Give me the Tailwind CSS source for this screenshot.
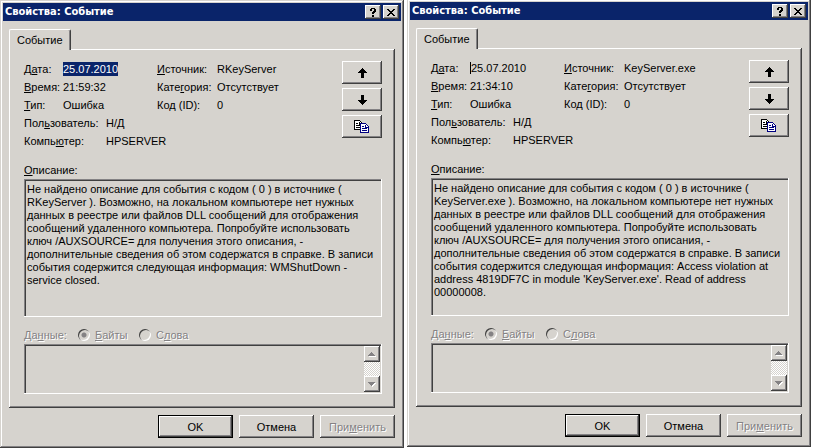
<!DOCTYPE html>
<html lang="ru">
<head>
    <meta charset="UTF-8">
    <meta name="viewport" content="width=device-width, initial-scale=1.0">
    <title>Свойства: Событие</title>
    <script src="https://cdn.jsdelivr.net/npm/@tailwindcss/browser@4"></script>
</head>
<body class="bg-white font-['Liberation_Sans',sans-serif] text-[11px] leading-[18px] text-black">
    <main id="windows" class="grid grid-cols-2 gap-[3px] pr-[2px] items-start"></main>

    <script>
        const events = [
            {
                id: 'rkey',
                offset: '',
                date: '<span class="bg-[#0a246a] text-white py-px">25.07.2010</span>',
                time: '21:59:32',
                source: 'RKeyServer',
                text: `Не найдено описание для события с кодом ( 0 ) в источнике (
RKeyServer ). Возможно, на локальном компьютере нет нужных
данных в реестре или файлов DLL сообщений для отображения
сообщений удаленного компьютера. Попробуйте использовать
ключ /AUXSOURCE= для получения этого описания, -
дополнительные сведения об этом содержатся в справке. В записи
события содержится следующая информация: WMShutDown -
service closed.`
            },
            {
                id: 'key',
                offset: '-mt-px',
                date: '<span class="border-l border-black">25.07.2010</span>',
                time: '21:34:10',
                source: 'KeyServer.exe',
                text: `Не найдено описание для события с кодом ( 0 ) в источнике (
KeyServer.exe ). Возможно, на локальном компьютере нет нужных
данных в реестре или файлов DLL сообщений для отображения
сообщений удаленного компьютера. Попробуйте использовать
ключ /AUXSOURCE= для получения этого описания, -
дополнительные сведения об этом содержатся в справке. В записи
события содержится следующая информация: Access violation at
address 4819DF7C in module 'KeyServer.exe'. Read of address
00000008.`
            }
        ];

        const raised = 'bg-[#d6d3ce] shadow-[inset_-1px_-1px_0_#404040,inset_1px_1px_0_#fff,inset_-2px_-2px_0_#848284]';
        const sunken = 'bg-[#d6d3ce] shadow-[inset_-1px_-1px_0_#fff,inset_1px_1px_0_#848284,inset_2px_2px_0_#404040]';

        function renderWindow(e) {
            return `
            <section class="${e.offset} bg-[#d6d3ce] p-[3px] pb-[10px] shadow-[inset_-1px_-1px_0_#404040,inset_1px_1px_0_#d6d3ce,inset_-2px_-2px_0_#848284,inset_2px_2px_0_#fff]">
                <header class="flex items-center h-[18px] bg-[#0a246a] px-[2px] gap-[2px]">
                    <h1 class="flex-1 font-['DejaVu_Sans_Condensed','DejaVu_Sans',sans-serif] font-bold leading-5 text-white">Свойства: Событие</h1>
                    <button aria-label="Справка" class="w-4 h-[14px] flex items-center justify-center ${raised}">
                        <svg width="6" height="9" viewBox="0 0 6 9" shape-rendering="crispEdges"><path d="M1 0h4v1h1v3h-1v1h-1v1h-2v-2h1v-1h1v-2h-2v2h-2v-2h1zM2 7h2v2h-2z"/></svg>
                    </button>
                    <button aria-label="Закрыть" class="w-4 h-[14px] flex items-center justify-center ${raised}">
                        <svg width="8" height="7" viewBox="0 0 8 7" shape-rendering="crispEdges"><path d="M0 0h2v1h1v1h2v-1h1v-1h2v1h-1v1h-1v1h-1v1h1v1h1v1h1v1h-2v-1h-1v-1h-2v1h-1v1h-2v-1h1v-1h1v-1h1v-1h-1v-1h-1v-1h-1z"/></svg>
                    </button>
                </header>

                <div class="px-[6px] pt-2">
                    <div role="tablist" class="flex">
                        <button role="tab" aria-selected="true" class="relative z-10 -mb-px h-[21px] px-[7px] rounded-t-[2px] bg-[#d6d3ce] border-t border-l border-white border-r border-r-[#404040] shadow-[inset_-1px_0_0_#848284]">Событие</button>
                    </div>

                    <div role="tabpanel" class="pl-[15px] pt-[11px] pb-[14px] pr-[13px] ${raised}">
                        <div class="flex justify-between">
                            <dl class="flex-1 grid grid-cols-[39px_43px_51px_60px_1fr] auto-rows-[18px] whitespace-nowrap">
                                <dt>Д<u>а</u>та:</dt><dd class="col-span-2">${e.date}</dd>
                                <dt><u>И</u>сточник:</dt><dd>${e.source}</dd>
                                <dt><u>В</u>ремя:</dt><dd class="col-span-2">${e.time}</dd>
                                <dt>Кате<u>г</u>ория:</dt><dd>Отсутствует</dd>
                                <dt><u>Т</u>ип:</dt><dd class="col-span-2">Ошибка</dd>
                                <dt>Ко<u>д</u> (ID):</dt><dd>0</dd>
                                <dt class="col-span-2">Пол<u>ь</u>зователь:</dt><dd class="col-span-3">Н/Д</dd>
                                <dt class="col-span-2">Компь<u>ю</u>тер:</dt><dd class="col-span-3">HPSERVER</dd>
                            </dl>
                            <div class="flex flex-col gap-1 pt-px">
                                <button aria-label="Предыдущее событие" class="w-10 h-[23px] flex items-center justify-center ${raised}">
                                    <svg width="9" height="10" viewBox="0 0 9 10" shape-rendering="crispEdges"><path d="M4 0h1v1h1v1h1v1h1v1h1v1h-3v5h-3v-5h-3v-1h1v-1h1v-1h1v-1h1z"/></svg>
                                </button>
                                <button aria-label="Следующее событие" class="w-10 h-[23px] flex items-center justify-center ${raised}">
                                    <svg width="9" height="10" viewBox="0 0 9 10" shape-rendering="crispEdges"><path d="M3 0h3v5h3v1h-1v1h-1v1h-1v1h-1v1h-1v-1h-1v-1h-1v-1h-1v-1h-1v-1h3z"/></svg>
                                </button>
                                <button aria-label="Копировать" class="w-10 h-[23px] flex items-center justify-center ${raised}">
                                    <svg width="16" height="13" viewBox="0 0 16 13" shape-rendering="crispEdges">
                                        <path d="M.5.5h5l3 3v6h-8z" fill="#fff" stroke="#000"/>
                                        <path d="M5 1v3h3M2 3h2M2 5h5M2 7h5" stroke="#000" fill="none" transform="translate(0 .5)"/>
                                        <path d="M6.5 3.5h5l3 3v6h-8z" fill="#fff" stroke="#000080"/>
                                        <path d="M11 4v3h3M8 6h2M8 8h5M8 10h5" stroke="#000080" fill="none" transform="translate(0 .5)"/>
                                    </svg>
                                </button>
                            </div>
                        </div>

                        <label for="${e.id}-text" class="block mt-[11px]"><u>О</u>писание:</label>
                        <textarea id="${e.id}-text" readonly class="block w-full h-[138px] pl-[3px] pt-1 resize-none overflow-hidden whitespace-pre leading-[13px] outline-none ${sunken}">${e.text}</textarea>

                        <fieldset disabled class="flex items-center mt-[9px] text-[#848284] [text-shadow:1px_1px_0_#fff]">
                            <legend class="float-left w-[54px]">Да<u>н</u>ные:</legend>
                            <label class="flex items-center gap-[5px] w-[61px]">
                                <input type="radio" name="${e.id}-format" checked class="appearance-none size-3 rounded-full bg-[radial-gradient(circle,#848284_2px,transparent_3px)] shadow-[inset_1px_1px_0_#404040,inset_-1px_-1px_0_#fff]">
                                <span><u>Б</u>айты</span>
                            </label>
                            <label class="flex items-center gap-[5px]">
                                <input type="radio" name="${e.id}-format" class="appearance-none size-3 rounded-full shadow-[inset_1px_1px_0_#404040,inset_-1px_-1px_0_#fff]">
                                <span>С<u>л</u>ова</span>
                            </label>
                        </fieldset>

                        <div class="flex h-[50px] p-[2px] ${sunken}">
                            <textarea aria-label="Данные" disabled class="flex-1 resize-none"></textarea>
                            <div class="flex flex-col w-4 bg-[repeating-conic-gradient(#fff_0_25%,#d6d3ce_0_50%)] bg-[length:2px_2px]">
                                <button disabled aria-label="Вверх" class="h-4 flex items-center justify-center ${raised}">
                                    <svg width="8" height="5" viewBox="0 0 8 5" shape-rendering="crispEdges"><path d="M4 1h1v1h1v1h1v1h1v1h-7v-1" fill="#fff"/><path d="M3 0h1v1h1v1h1v1h1v1h-7v-1h1v-1h1v-1h1z" fill="#848284"/></svg>
                                </button>
                                <button disabled aria-label="Вниз" class="mt-auto h-4 flex items-center justify-center ${raised}">
                                    <svg width="8" height="5" viewBox="0 0 8 5" shape-rendering="crispEdges"><path d="M1 1h7v1h-1v1h-1v1h-1v1h-1v-1h-1z" fill="#fff"/><path d="M0 0h7v1h-1v1h-1v1h-1v1h-1v-1h-1v-1h-1v-1h-1z" fill="#848284"/></svg>
                                </button>
                            </div>
                        </div>
                    </div>

                    <footer class="flex justify-end gap-[6px] mt-[7px]">
                        <button class="w-[75px] h-[23px] border border-black ${raised}">OK</button>
                        <button class="w-[75px] h-[23px] ${raised}">Отмена</button>
                        <button disabled class="w-[75px] h-[23px] text-[#848284] [text-shadow:1px_1px_0_#fff] ${raised}">При<u>м</u>енить</button>
                    </footer>
                </div>
            </section>`;
        }

        document.getElementById('windows').innerHTML = events.map(renderWindow).join('');
    </script>
</body>
</html>
